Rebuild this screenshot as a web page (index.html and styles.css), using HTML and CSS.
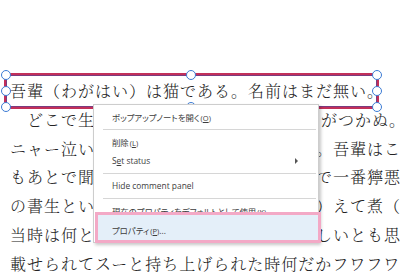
FILE: index.html
```html
<!DOCTYPE html>
<html lang="ja">
<head>
<meta charset="utf-8">
<link rel="stylesheet" href="styles.css">
</head>
<body>
<div class="doc">
  <p class="ln">吾輩（わがはい）は猫である。名前はまだ無い。</p>
  <p class="ln">　どこで生れたかとんと見当<span class="gap"></span>がつかぬ。</p>
  <p class="ln">ニャー泣いていた事だけは記憶している。吾輩はここで</p>
  <p class="ln">もあとで聞くとそれは書生という人間中で一番獰悪な種族</p>
  <p class="ln">の書生というのは時々我々を捕（つかま）えて煮（に）て食う</p>
  <p class="ln">当時は何という考もなかったから別段恐しいとも思わなかった</p>
  <p class="ln">載せられてスーと持ち上げられた時何だかフワフワした感じ</p>
</div>

<div class="annot"></div>
<div class="handles">
  <span class="h l t"></span><span class="h c t"></span><span class="h r t"></span>
  <span class="h l m"></span><span class="h r m"></span>
  <span class="h l b"></span><span class="h c b"></span><span class="h r b"></span>
</div>

<div class="menu">
  <div class="item"><span>ポップアップノートを開く<span class="key">(<u>O</u>)</span></span></div>
  <div class="sep"></div>
  <div class="item"><span>削除<span class="key">(<u>L</u>)</span></span></div>
  <div class="item"><span>S<u>e</u>t status</span><i class="arrow"></i></div>
  <div class="sep"></div>
  <div class="item"><span>Hide comment panel</span></div>
  <div class="sep"></div>
  <div class="item"><span>現在のプロパティをデフォルトとして使用<span class="key">(<u>K</u>)</span></span></div>
  <div class="item sel"><span class="txt">プロパティ<span class="key">(<u>P</u>)</span>...</span></div>
</div>
</body>
</html>
```

FILE: styles.css
```css
html, body {
  margin: 0;
  padding: 0;
}
body {
  width: 400px;
  height: 274px;
  overflow: hidden;
  position: relative;
  background: #ffffff;
}

.doc {
  padding: 77px 0 0 10px;
  font-family: "Noto Serif CJK JP", "Noto Sans CJK JP", serif;
  font-size: 16px;
  font-weight: 300;
  letter-spacing: 1px;
  line-height: 28.8px;
  color: #222222;
  white-space: nowrap;
  overflow: hidden;
}
.ln {
  margin: 0;
}
.gap {
  display: inline-block;
  width: 90px;
}

.annot {
  position: absolute;
  left: 4px;
  top: 73px;
  width: 375px;
  height: 36px;
  box-sizing: border-box;
  border: 2px solid #c2305a;
  box-shadow: inset 0 0 0 1px #7a3c80;
}

.handles {
  position: absolute;
  left: 5.5px;
  top: 74.5px;
  width: 371.5px;
  height: 32.5px;
}
.h {
  position: absolute;
  width: 10px;
  height: 10px;
  margin: -5px 0 0 -5px;
  box-sizing: border-box;
  border: 1.5px solid #3b7bd4;
  border-radius: 50%;
  background: #ffffff;
}
.h.l { left: 0; }
.h.c { left: 50%; }
.h.r { left: 100%; }
.h.t { top: 0; }
.h.m { top: 50%; }
.h.b { top: 100%; }

.menu {
  position: absolute;
  left: 93px;
  top: 104px;
  width: 226px;
  box-sizing: border-box;
  padding: 2px 0 3px;
  background: #ffffff;
  border: 1px solid #cdcdcd;
  box-shadow: 2px 2px 3px rgba(0, 0, 0, 0.22);
  font-family: "Open Sans", "Noto Sans CJK JP", sans-serif;
  font-size: 8.4px;
  font-feature-settings: "palt";
  color: #3c3c3c;
  z-index: 2;
}
.item {
  position: relative;
  height: 19px;
  display: flex;
  align-items: center;
  padding-left: 18px;
  white-space: nowrap;
}
.key {
  font-size: 7.5px;
  margin-left: 1px;
}
.sep {
  height: 1px;
  margin: 2.5px 2px 2.5px 9px;
  background: #d6d6d6;
}
.arrow {
  position: absolute;
  right: 20px;
  top: 6.5px;
  width: 0;
  height: 0;
  border-left: 3.5px solid #555555;
  border-top: 3px solid transparent;
  border-bottom: 3px solid transparent;
}
.item.sel::before {
  content: "";
  position: absolute;
  left: 1px;
  right: -3px;
  top: -8px;
  bottom: -4px;
  border: 3px solid #f3a9c6;
  background: #e4eff9;
}
.item.sel .txt {
  position: relative;
  z-index: 1;
}
```
